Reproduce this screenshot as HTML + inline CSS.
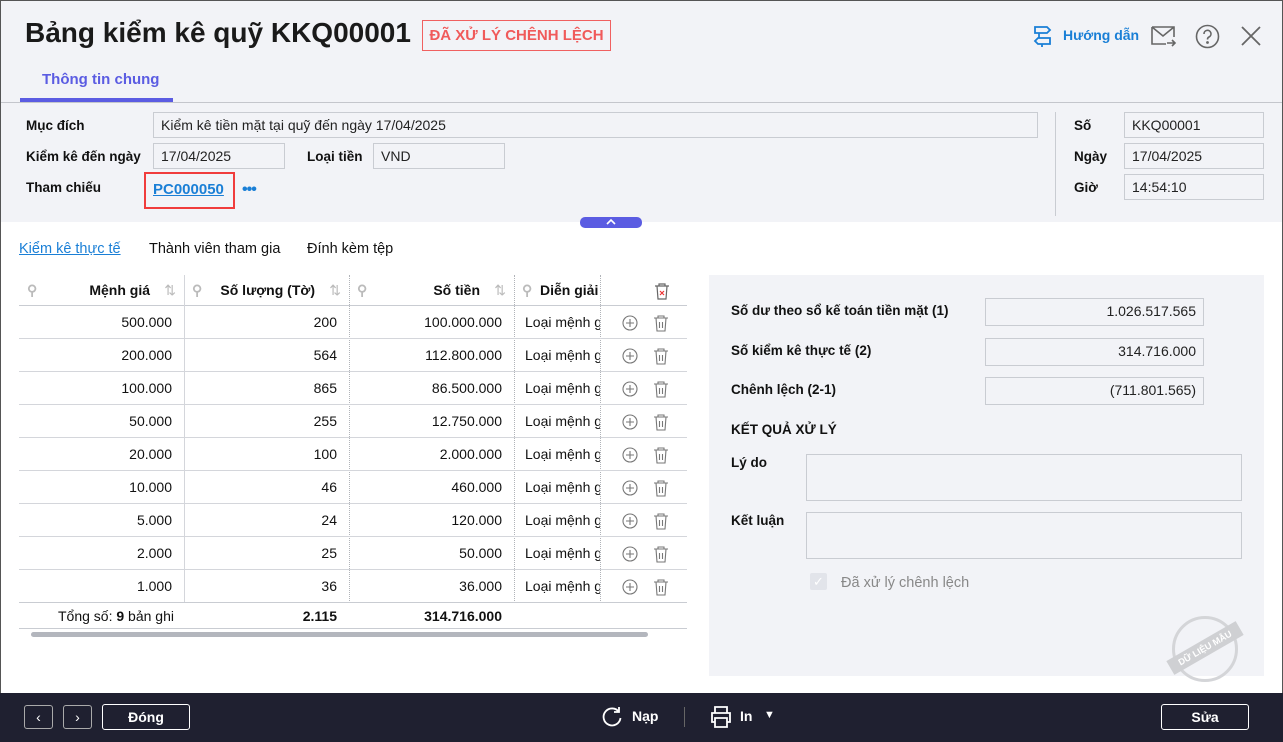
<!DOCTYPE html>
<html><head><meta charset="utf-8"><style>
*{box-sizing:border-box;margin:0;padding:0}
body{width:1283px;height:742px;overflow:hidden;font-family:"Liberation Sans",sans-serif;font-size:14px;color:#111;background:#fff;position:relative}
.a{position:absolute}
.win{position:absolute;left:0;top:0;width:1283px;height:742px;border:1px solid #555;border-bottom:none}
.hdr{left:1px;top:1px;width:1281px;height:221px;background:#f2f3f7}
.lbl{font-weight:bold;font-size:13.5px}
.inp{border:1px solid #c9ccd2;background:#f2f3f7;height:26px;padding:4px 7px;font-size:14px;color:#222}
.th{position:absolute;top:275px;height:31px;border-bottom:1px solid #c9ccd2;font-weight:bold;font-size:14px;line-height:31px}
.row{position:absolute;left:19px;width:668px;height:33px;border-bottom:1px solid #d4d6db}
.c{position:absolute;top:0;height:32px;line-height:32px;text-align:right;font-size:14px}
.vl{position:absolute;top:275px;height:328px;border-left:1px dotted #b0b3b8}
.btn{position:absolute;border:1px solid #fff;border-radius:3px;color:#fff;font-weight:bold;text-align:center;font-size:14px}
</style></head><body>
<div class="win"></div>
<div class="a hdr"></div>
<div class="a" style="left:25px;top:17px;font-size:28px;font-weight:bold;color:#1a1a1a">Bảng kiểm kê quỹ KKQ00001</div>
<div class="a" style="left:422px;top:20px;width:189px;height:31px;border:1px solid #f06060;color:#f05a5a;font-size:15px;font-weight:bold;line-height:29px;text-align:center">ĐÃ XỬ LÝ CHÊNH LỆCH</div>
<svg class="a" style="left:1032px;top:24px" width="22" height="24" viewBox="0 0 22 24" fill="none" stroke="#1a7fd6" stroke-width="1.8"><path d="M3 3h12l3 3-3 3H3z M7 9v5 M18 14H6l-3 3 3 3h12z M10 20v3"/></svg>
<div class="a" style="left:1063px;top:27px;color:#1a7fd6;font-size:14px;font-weight:bold">Hướng dẫn</div>
<svg class="a" style="left:1150px;top:24px" width="28" height="24" viewBox="0 0 28 24" fill="none" stroke="#666" stroke-width="1.6"><path d="M2 3h22v10 M2 3v17h14 M2 3l11 9 11-9 M17 19h8 M22 16l3 3-3 3"/></svg>
<svg class="a" style="left:1195px;top:24px" width="25" height="25" viewBox="0 0 25 25" fill="none" stroke="#666" stroke-width="1.6"><circle cx="12.5" cy="12.5" r="11"/><path d="M9 10a3.5 3.5 0 1 1 5 3c-1.3.6-1.5 1.3-1.5 2.5"/><circle cx="12.5" cy="18.5" r=".6" fill="#666"/></svg>
<svg class="a" style="left:1240px;top:25px" width="22" height="22" viewBox="0 0 22 22" stroke="#666" stroke-width="1.8"><path d="M2 2l18 18M20 2L2 20"/></svg>
<div class="a" style="left:42px;top:71px;color:#5b5ce2;font-weight:bold;font-size:15px">Thông tin chung</div>
<div class="a" style="left:20px;top:98px;width:153px;height:4px;background:#5b5ce2"></div>
<div class="a" style="left:1px;top:102px;width:1281px;height:1px;background:#c4c6cc"></div>

<div class="a lbl" style="left:26px;top:118px">Mục đích</div>
<div class="a inp" style="left:153px;top:112px;width:885px">Kiểm kê tiền mặt tại quỹ đến ngày 17/04/2025</div>
<div class="a lbl" style="left:26px;top:149px">Kiểm kê đến ngày</div>
<div class="a inp" style="left:153px;top:143px;width:132px">17/04/2025</div>
<div class="a lbl" style="left:307px;top:149px">Loại tiền</div>
<div class="a inp" style="left:373px;top:143px;width:132px">VND</div>
<div class="a lbl" style="left:26px;top:180px">Tham chiếu</div>
<div class="a" style="left:144px;top:172px;width:91px;height:37px;border:2px solid #f03c3c"></div>
<div class="a" style="left:153px;top:181px;color:#1a7fd6;font-weight:bold;text-decoration:underline;font-size:15px">PC000050</div>
<div class="a" style="left:242px;top:181px;color:#1a7fd6;font-weight:bold;font-size:16px;letter-spacing:-1px">•••</div>
<div class="a" style="left:1055px;top:112px;width:1px;height:104px;background:#c9ccd2"></div>
<div class="a lbl" style="left:1074px;top:118px">Số</div>
<div class="a inp" style="left:1124px;top:112px;width:140px">KKQ00001</div>
<div class="a lbl" style="left:1074px;top:149px">Ngày</div>
<div class="a inp" style="left:1124px;top:143px;width:140px">17/04/2025</div>
<div class="a lbl" style="left:1074px;top:180px">Giờ</div>
<div class="a inp" style="left:1124px;top:174px;width:140px">14:54:10</div>
<div class="a" style="left:580px;top:217px;width:62px;height:11px;background:#5b5ce2;border-radius:5px"></div>
<svg class="a" style="left:605px;top:218px" width="12" height="8" viewBox="0 0 12 8" fill="none" stroke="#fff" stroke-width="1.6"><path d="M2 6l4-4 4 4"/></svg>

<div class="a" style="left:19px;top:241px;color:#1a7fd6;font-size:14.5px;text-decoration:underline">Kiểm kê thực tế</div>
<div class="a" style="left:149px;top:241px;font-size:14.5px">Thành viên tham gia</div>
<div class="a" style="left:307px;top:241px;font-size:14.5px">Đính kèm tệp</div>

<div class="a" style="left:19px;top:275px;width:668px;height:31px;border-bottom:1px solid #c9ccd2"></div>
<div class="th" style="left:19px;width:165px"><span style="position:absolute;left:8px;color:#bbb">⚲</span><span style="position:absolute;right:34px">Mệnh giá</span><span style="position:absolute;right:8px;color:#bbb;font-weight:normal">⇅</span></div>
<div class="th" style="left:184px;width:165px"><span style="position:absolute;left:8px;color:#bbb">⚲</span><span style="position:absolute;right:34px">Số lượng (Tờ)</span><span style="position:absolute;right:8px;color:#bbb;font-weight:normal">⇅</span></div>
<div class="th" style="left:349px;width:165px"><span style="position:absolute;left:8px;color:#bbb">⚲</span><span style="position:absolute;right:34px">Số tiền</span><span style="position:absolute;right:8px;color:#bbb;font-weight:normal">⇅</span></div>
<div class="th" style="left:514px;width:86px"><span style="position:absolute;left:8px;color:#bbb">⚲</span><span style="position:absolute;left:26px">Diễn giải</span></div>
<svg class="a" style="left:654px;top:282px" width="16" height="18" viewBox="0 0 16 18" fill="none" stroke="#666" stroke-width="1.2"><path d="M1 4h14 M5 4V2h6v2 M3 4l1 13h8l1-13"/><path d="M6 9l4 4M10 9l-4 4" stroke="#e33"/></svg>
<div class="a" style="left:184px;top:275px;height:328px;border-left:1px solid #d4d6db"></div>
<div class="vl" style="left:349px"></div><div class="vl" style="left:514px"></div><div class="vl" style="left:600px"></div>

<div id="rows"></div>
<script>
var d=[["500.000","200","100.000.000"],["200.000","564","112.800.000"],["100.000","865","86.500.000"],["50.000","255","12.750.000"],["20.000","100","2.000.000"],["10.000","46","460.000"],["5.000","24","120.000"],["2.000","25","50.000"],["1.000","36","36.000"]];
var h="";
d.forEach(function(r,i){var t=306+i*33;
h+='<div class="row" style="top:'+t+'px"><div class="c" style="left:0;width:153px">'+r[0]+'</div><div class="c" style="left:165px;width:153px">'+r[1]+'</div><div class="c" style="left:330px;width:153px">'+r[2]+'</div><div class="c" style="left:506px;width:75px;text-align:left;overflow:hidden;white-space:nowrap">Loại mệnh giá</div>'+
'<svg style="position:absolute;left:603px;top:9px" width="16" height="16" viewBox="0 0 16 16" fill="none" stroke="#777" stroke-width="1.1"><circle cx="8" cy="8" r="7"/><path d="M8 4v8M4 8h8"/></svg>'+
'<svg style="position:absolute;left:634px;top:8px" width="16" height="18" viewBox="0 0 16 18" fill="none" stroke="#777" stroke-width="1.1"><path d="M1 4h14 M5 4V2h6v2 M3 4l1 13h8l1-13 M6.5 8v6M9.5 8v6"/></svg></div>';});
document.getElementById("rows").innerHTML=h;
</script>
<div class="a" style="left:19px;top:602px;width:668px;height:1px;background:#c9ccd2"></div>
<div class="a" style="left:58px;top:608px;font-size:14px">Tổng số: <b>9</b> bản ghi</div>
<div class="a" style="left:184px;top:608px;width:153px;text-align:right;font-weight:bold">2.115</div>
<div class="a" style="left:349px;top:608px;width:153px;text-align:right;font-weight:bold">314.716.000</div>
<div class="a" style="left:19px;top:628px;width:668px;height:1px;background:#c9ccd2"></div>
<div class="a" style="left:31px;top:632px;width:617px;height:5px;background:#b3b6bd;border-radius:3px"></div>

<div class="a" style="left:709px;top:275px;width:555px;height:401px;background:#f2f3f7"></div>
<div class="a lbl" style="left:731px;top:303px">Số dư theo sổ kế toán tiền mặt (1)</div>
<div class="a inp" style="left:985px;top:298px;width:219px;height:28px;text-align:right">1.026.517.565</div>
<div class="a lbl" style="left:731px;top:343px">Số kiểm kê thực tế (2)</div>
<div class="a inp" style="left:985px;top:338px;width:219px;height:28px;text-align:right">314.716.000</div>
<div class="a lbl" style="left:731px;top:382px">Chênh lệch (2-1)</div>
<div class="a inp" style="left:985px;top:377px;width:219px;height:28px;text-align:right">(711.801.565)</div>
<div class="a lbl" style="left:731px;top:422px">KẾT QUẢ XỬ LÝ</div>
<div class="a lbl" style="left:731px;top:455px">Lý do</div>
<div class="a inp" style="left:806px;top:454px;width:436px;height:47px"></div>
<div class="a lbl" style="left:731px;top:513px">Kết luận</div>
<div class="a inp" style="left:806px;top:512px;width:436px;height:47px"></div>
<div class="a" style="left:810px;top:573px;width:17px;height:17px;background:#e2e4ea;border-radius:2px;color:#fff;font-size:13px;text-align:center;line-height:17px">✓</div>
<div class="a" style="left:841px;top:575px;color:#888;font-size:14.5px">Đã xử lý chênh lệch</div>
<div class="a" style="left:1172px;top:616px;width:66px;height:66px;border:3px solid #d4d5d8;border-radius:50%"></div>
<div class="a" style="left:1165px;top:640px;width:80px;height:16px;background:#cfd0d3;color:#fff;font-size:9px;font-weight:bold;text-align:center;line-height:16px;transform:rotate(-30deg)">DỮ LIỆU MẪU</div>

<div class="a" style="left:0;top:693px;width:1283px;height:49px;background:#1f2030"></div>
<div class="btn" style="left:24px;top:705px;width:29px;height:24px;border-color:#aaa;line-height:22px;font-weight:normal">‹</div>
<div class="btn" style="left:63px;top:705px;width:29px;height:24px;border-color:#aaa;line-height:22px;font-weight:normal">›</div>
<div class="btn" style="left:102px;top:704px;width:88px;height:26px;line-height:24px">Đóng</div>
<svg class="a" style="left:601px;top:706px" width="22" height="22" viewBox="0 0 22 22" fill="none" stroke="#fff" stroke-width="1.8"><path d="M18 6A8.5 8.5 0 1 0 19.5 12 M18 1v5h-5"/></svg>
<div class="a" style="left:632px;top:708px;color:#fff;font-weight:bold">Nạp</div>
<div class="a" style="left:684px;top:707px;width:1px;height:20px;background:#666"></div>
<svg class="a" style="left:709px;top:705px" width="24" height="24" viewBox="0 0 24 24" fill="none" stroke="#fff" stroke-width="1.8"><path d="M6 8V2h12v6 M6 17H3V8h18v9h-3 M6 13h12v9H6z"/></svg>
<div class="a" style="left:740px;top:708px;color:#fff;font-weight:bold">In</div>
<div class="a" style="left:764px;top:709px;color:#fff;font-size:11px">▼</div>
<div class="btn" style="left:1161px;top:704px;width:88px;height:26px;line-height:24px">Sửa</div>
</body></html>
